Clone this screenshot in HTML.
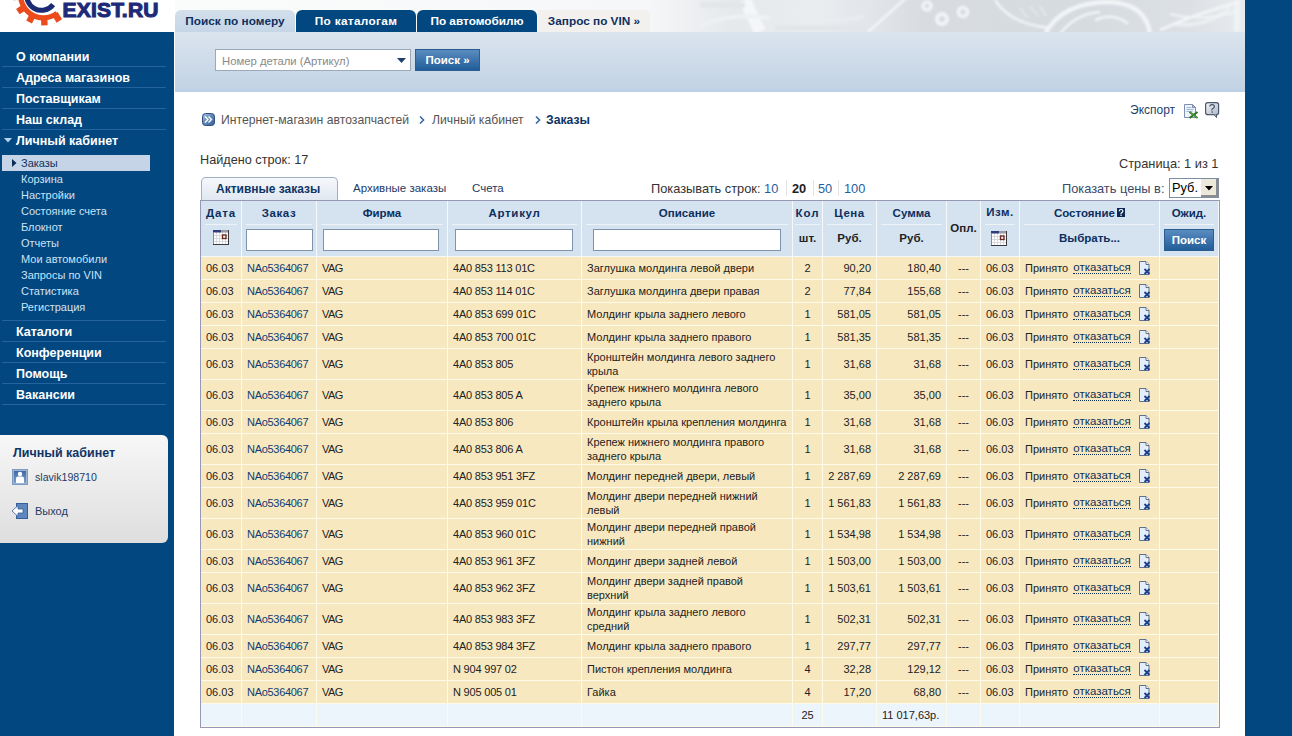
<!DOCTYPE html>
<html><head><meta charset="utf-8">
<style>
*{box-sizing:border-box}
html,body{margin:0;padding:0;width:1292px;height:736px;overflow:hidden;background:#fff;font-family:"Liberation Sans",sans-serif;font-size:11px;color:#222}
.abs{position:absolute;white-space:nowrap}
#side{position:absolute;left:0;top:32px;width:174px;height:704px;background:#02477f}
#rstrip{position:absolute;left:1245px;top:0;width:47px;height:736px;background:#02477f}
#hdr{position:absolute;left:175px;top:0}
#band{position:absolute;left:175px;top:32px;width:1070px;height:60px;background:linear-gradient(#dae4ee,#c3d3e4 92%,#bbd0e7)}
.tab{position:absolute;top:10px;height:22px;border-radius:6px 6px 0 0;font-weight:bold;font-size:11.8px;text-align:center;line-height:23px;white-space:nowrap}
.menu{position:absolute;left:16px;color:#fff;font-weight:bold;font-size:12.5px;line-height:21px;white-space:nowrap}
.msep{position:absolute;left:2px;width:164px;height:1px;background:#2563a0}
.sub{position:absolute;left:21px;color:#cce3f8;font-size:11px;line-height:16px;white-space:nowrap}
#cab{position:absolute;left:0;top:435px;width:168px;height:108px;border-radius:0 6px 6px 0;background:linear-gradient(#f7f7f7,#dedede)}
#tbl{position:absolute;left:200px;top:200px;width:1020px;height:528px;border:1px solid #9699b6;background:#fff}
.row{display:flex;position:relative}
.c{position:relative;height:100%;border-right:1px solid #fffbea;border-bottom:1px solid #fffbea;background:#f8e8c0;display:flex;align-items:center;padding:0 5px;line-height:14px;white-space:nowrap;color:#222}
.c a{color:#0d3c73;letter-spacing:-0.3px}.row:not(.hd) .c2{letter-spacing:-0.6px}.row:not(.hd) .c3{letter-spacing:-0.2px}
.c0{width:41px}.c1{width:75px}.c2{width:131px}.c3{width:134px}.c4{width:211px}.c5{width:30px;justify-content:center}.c6{width:54px;justify-content:flex-end}.c7{width:70px;justify-content:flex-end}.c8{width:34px;justify-content:center}.c9{width:39px}.c10{width:140px}.c11{width:59px}
.tot .c{background:#ecf4fc}
.tot .c7{justify-content:flex-start}
.otk{color:#0f2f55;border-bottom:1px dotted #0f2f55;margin-left:5px;line-height:12px;font-size:11.5px;position:relative;top:-1px}
.xi{margin-left:8px}
.hd .c{border-color:#f6f9fc;background:#d5e2ef;display:block;padding:0;font-weight:bold;color:#0c2f5e;font-size:11.5px;text-align:center}
.h1{position:absolute;left:4px;right:4px;top:0;height:24px;line-height:24px;border-bottom:1px solid #eef3f8}
.h2{position:absolute;left:0;right:0;top:24px;height:31px;line-height:27px}
.inp{position:absolute;top:28px;height:22px;border:1px solid #7f93ad;background:#fff}
.btn{background:linear-gradient(#5b8cc0,#215d98);color:#fff;font-weight:bold;border:1px solid #2a5d92;text-align:center}

</style></head><body>
<!-- logo -->
<svg class="abs" style="left:0;top:0" width="170" height="31"><g fill="#ec4b1c"><path d="M58.69 15.29A25.4 25.4 0 0 1 19.53 -13.69L24.42 -11.91A20.2 20.2 0 0 0 55.56 11.13Z"/><path d="M57.62 12.09L62.06 19.33L56.61 22.68L52.17 15.43Z"/><path d="M47.37 16.87L47.66 25.37L41.27 25.59L40.97 17.10Z"/><path d="M35.90 15.93L31.91 23.43L26.26 20.43L30.25 12.92Z"/><path d="M26.69 9.67L19.56 14.30L16.08 8.93L23.21 4.30Z"/><path d="M21.68 -0.27L13.20 0.32L12.75 -6.06L21.23 -6.66Z"/></g><path fill="#1d2a74" d="M55.13 6.15A17.3 17.3 0 0 1 25.24 -10.42L29.94 -8.71A12.3 12.3 0 0 0 51.19 3.07Z"/><text x="62.5" y="17.2" font-family="Liberation Sans" font-weight="bold" font-size="21" letter-spacing="0.2" fill="#1e2a78" stroke="#1e2a78" stroke-width="1.1">EXIST.RU</text></svg>

<svg id="hdr" width="1070" height="32" viewBox="175 0 1070 32"><defs><linearGradient id="hg" x1="175" x2="1245" gradientUnits="userSpaceOnUse"><stop offset="0" stop-color="#fafbfb"/><stop offset="0.44" stop-color="#f6f7f8"/><stop offset="0.48" stop-color="#eef0f2"/><stop offset="0.52" stop-color="#e6e9ec"/><stop offset="0.6" stop-color="#eaedf0"/><stop offset="0.65" stop-color="#e2e5e9"/><stop offset="0.7" stop-color="#d8dce0"/><stop offset="0.85" stop-color="#d6dbe0"/><stop offset="0.95" stop-color="#dde1e5"/><stop offset="1" stop-color="#e8ebee"/></linearGradient></defs><rect x="175" y="0" width="1070" height="32" fill="url(#hg)"/><filter id="hb" x="-5%" y="-50%" width="110%" height="200%"><feGaussianBlur stdDeviation="1.1"/></filter><g filter="url(#hb)" fill="none" stroke="#f2f4f6"><path d="M868 32L906 -2" stroke-width="3"/><path d="M1045 34Q1062 2 1110 2Q1146 4 1150 34" stroke-width="4.5"/><path d="M1060 34Q1075 14 1100 12" stroke-width="2.5"/><path d="M1237 0v32" stroke-width="6" stroke="#f0f3f6"/><path d="M1175 24Q1205 28 1230 8" stroke-width="4" stroke="#eceff2"/><circle cx="927" cy="6" r="4" stroke-width="3.5"/><circle cx="942" cy="19" r="5" stroke-width="4"/><circle cx="963" cy="12" r="4.5" stroke-width="3.5"/><path d="M995 0Q1010 24 1050 28" stroke-width="2.5"/><path d="M1160 30Q1200 12 1240 2" stroke-width="3"/><path d="M1170 14Q1200 22 1235 12" stroke-width="2"/><path d="M1095 20Q1115 12 1128 24" stroke-width="2.5"/><path d="M745 0L760 32" stroke-width="12" stroke="#f4f6f8"/><path d="M700 26Q730 12 770 18" stroke-width="4" stroke="#eef1f3"/><path d="M790 10Q830 26 865 16" stroke-width="3" stroke="#eaedf0"/><path d="M1020 8l8 10M1030 6l8 10M1040 6l6 10" stroke-width="1.5" stroke="#e6e9ec"/><path d="M700 5h45M775 28h90" stroke-width="5" stroke="#e2e6e9"/></g></svg>
<div id="rstrip"></div>
<div id="band"></div>
<div class="tab" style="left:175px;width:120px;background:linear-gradient(#d3dfeb,#c5d6e7);color:#0e2f5e">Поиск по номеру</div>
<div class="tab" style="left:296px;width:120px;background:#02477f;color:#fff;letter-spacing:0.35px">По каталогам</div>
<div class="tab" style="left:417px;width:120px;background:#02477f;color:#fff">По автомобилю</div>
<div class="tab" style="left:538px;width:112px;border-radius:0 5px 0 0;background:#f2f1ee;color:#0e2f5e">Запрос по VIN »</div>
<!-- search -->
<div class="abs" style="left:215px;top:49px;width:196px;height:22px;background:#fff;border:1px solid #9aaabb"></div>
<div class="abs" style="left:222px;top:55px;font-size:11.3px;color:#8a8a8a">Номер детали (Артикул)</div>
<svg class="abs" style="left:397px;top:58px" width="9" height="5"><path d="M0 0h9L4.5 5z" fill="#1d3f6e"/></svg>
<div class="abs btn" style="left:415px;top:49px;width:65px;height:22px;line-height:20px;font-size:11.5px">Поиск »</div>

<!-- sidebar -->
<div id="side"></div>
<div class="menu" style="top:47px">О компании</div>
<div class="msep" style="top:66px"></div>
<div class="menu" style="top:68px">Адреса магазинов</div>
<div class="msep" style="top:87px"></div>
<div class="menu" style="top:89px">Поставщикам</div>
<div class="msep" style="top:108px"></div>
<div class="menu" style="top:110px">Наш склад</div>
<div class="msep" style="top:129px"></div>
<svg class="abs" style="left:4px;top:138px" width="8" height="5"><path d="M0 0h8L4 4.5z" fill="#b5d3ee"/></svg>
<div class="menu" style="top:131px">Личный кабинет</div>
<div class="abs" style="left:2px;top:155px;width:148px;height:16px;background:#c5d5e7"></div>
<svg class="abs" style="left:12px;top:159px" width="5" height="8"><path d="M0 0v8l4.5-4z" fill="#0d2d57"/></svg>
<div class="sub" style="top:155px;color:#10305a">Заказы</div>
<div class="sub" style="top:171px">Корзина</div>
<div class="sub" style="top:187px">Настройки</div>
<div class="sub" style="top:203px">Состояние счета</div>
<div class="sub" style="top:219px">Блокнот</div>
<div class="sub" style="top:235px">Отчеты</div>
<div class="sub" style="top:251px">Мои автомобили</div>
<div class="sub" style="top:267px">Запросы по VIN</div>
<div class="sub" style="top:283px">Статистика</div>
<div class="sub" style="top:299px">Регистрация</div>
<div class="msep" style="top:320px"></div>
<div class="menu" style="top:322px">Каталоги</div>
<div class="msep" style="top:341px"></div>
<div class="menu" style="top:343px">Конференции</div>
<div class="msep" style="top:362px"></div>
<div class="menu" style="top:364px">Помощь</div>
<div class="msep" style="top:383px"></div>
<div class="menu" style="top:385px">Вакансии</div>
<div class="msep" style="top:404px"></div>

<div id="cab"></div>
<div class="abs" style="left:13px;top:446px;font-weight:bold;font-size:12.5px;color:#0f3466">Личный кабинет</div>
<svg class="abs" style="left:12px;top:469px" width="16" height="16"><defs><linearGradient id="ug" x1="0" y1="0" x2="0" y2="1"><stop offset="0" stop-color="#3f6aa5"/><stop offset="1" stop-color="#7ea0c9"/></linearGradient></defs><rect x="0.5" y="0.5" width="15" height="15" fill="#9bb4d3" stroke="#7e9cc2"/><rect x="2" y="2" width="12" height="12" fill="url(#ug)"/><circle cx="8" cy="5" r="2.2" fill="#fff"/><path d="M4 14v-4.5q0-2 2-2h4q2 0 2 2V14z" fill="#fff"/></svg>
<div class="abs" style="left:35px;top:471px;color:#1d3a66;font-size:10.6px">slavik198710</div>
<svg class="abs" style="left:12px;top:503px" width="16" height="16"><rect x="4.5" y="0.5" width="11" height="15" fill="#5f86bd" stroke="#35609b"/><path d="M0 8l6-5.5v3.5h5v4H6v3.5z" fill="#fff" stroke="#35609b" stroke-width="0.8"/></svg>
<div class="abs" style="left:35px;top:505px;color:#1d3a66">Выход</div>

<!-- breadcrumb -->
<svg class="abs" style="left:202px;top:113px" width="13" height="13"><defs><linearGradient id="bg1" x1="0" y1="0" x2="1" y2="1"><stop offset="0" stop-color="#a9c2de"/><stop offset="0.5" stop-color="#5f86b8"/><stop offset="1" stop-color="#365f95"/></linearGradient></defs><rect x="0.5" y="0.5" width="12" height="12" rx="3" fill="url(#bg1)" stroke="#2f4f80"/><path d="M3 3.5l3 3-3 3M6.5 3.5l3 3-3 3" stroke="#fff" stroke-width="1.4" fill="none"/></svg>
<div class="abs" style="left:221px;top:113px;font-size:12.2px;color:#555">Интернет-магазин автозапчастей</div>
<svg class="abs" style="left:419px;top:116px" width="6" height="8"><path d="M1 0.5l3.5 3.5L1 7.5" stroke="#3b6aa5" stroke-width="1.6" fill="none"/></svg>
<div class="abs" style="left:432px;top:113px;font-size:12.2px;color:#555">Личный кабинет</div>
<svg class="abs" style="left:535px;top:116px" width="6" height="8"><path d="M1 0.5l3.5 3.5L1 7.5" stroke="#3b6aa5" stroke-width="1.6" fill="none"/></svg>
<div class="abs" style="left:546px;top:113px;font-size:12.2px;font-weight:bold;color:#0f3466">Заказы</div>

<div class="abs" style="left:1130px;top:103px;font-size:12px;color:#1f3f6a">Экспорт</div>
<svg class="abs" style="left:1184px;top:104px" width="15" height="15"><path d="M0.5 0.5h8l3 3v10h-11z" fill="#eef4fb" stroke="#7e8fb0"/><path d="M8.5 0.5v3h3z" fill="#a8b8d0" stroke="#7e8fb0"/><path d="M2.5 3.5h5M2.5 5.5h7M2.5 7.5h6" stroke="#9fb4d0"/><path d="M5.5 8l8 6M13.5 8l-8 6" stroke="#2d7420" stroke-width="2"/><path d="M6 8.5l7.5 5.5" stroke="#6fbf5a" stroke-width="0.7"/></svg>
<svg class="abs" style="left:1205px;top:102px" width="15" height="16"><defs><linearGradient id="qg" x1="0" y1="0" x2="1" y2="1"><stop offset="0" stop-color="#f4f6fa"/><stop offset="1" stop-color="#aeb8c8"/></linearGradient></defs><rect x="0.6" y="0.6" width="13" height="12" rx="2.2" fill="url(#qg)" stroke="#4d586b" stroke-width="1.2"/><path d="M9 12.5l2.5 3v-3" fill="#c0c8d6" stroke="#4d586b"/><path d="M4.8 4.6q0-2 2.3-2t2.3 2q0 1.3-1.5 2t-.8 1.8" fill="none" stroke="#454d5c" stroke-width="1.1"/><rect x="6.6" y="9.4" width="1.3" height="1.3" fill="#454d5c"/></svg>
<div class="abs" style="left:200px;top:153px;font-size:12.7px;color:#333">Найдено строк: 17</div>
<div class="abs" style="left:1119px;top:156px;font-size:12.8px;color:#333">Страница: 1 из 1</div>

<!-- tabs -->
<div class="abs" style="left:201px;top:177px;width:137px;height:24px;border:1px solid #9fb0c6;border-bottom:0;border-radius:5px 5px 0 0;background:linear-gradient(#f6f8fb,#dfe7f1)"></div>
<div class="abs" style="left:216px;top:182px;font-size:12px;font-weight:bold;color:#0f3466">Активные заказы</div>
<div class="abs" style="left:353px;top:182px;font-size:11.5px;color:#1d3a66">Архивные заказы</div>
<div class="abs" style="left:472px;top:182px;font-size:11.5px;color:#1d3a66">Счета</div>
<div class="abs" style="left:651px;top:181px;font-size:12.8px;color:#333">Показывать строк: <span style="color:#1f5fa0">10</span></div>
<div class="abs" style="left:786px;top:180px;width:1px;height:16px;background:#e3e3e3"></div>
<div class="abs" style="left:792px;top:181px;font-size:12.8px;font-weight:bold;color:#222">20</div>
<div class="abs" style="left:813px;top:180px;width:1px;height:16px;background:#e3e3e3"></div>
<div class="abs" style="left:818px;top:181px;font-size:12.8px;color:#1f5fa0">50</div>
<div class="abs" style="left:838px;top:180px;width:1px;height:16px;background:#e3e3e3"></div>
<div class="abs" style="left:844px;top:181px;font-size:12.8px;color:#1f5fa0">100</div>
<div class="abs" style="left:1062px;top:181px;font-size:12.8px;color:#3a4a6a">Показать цены в:</div>
<div class="abs" style="left:1169px;top:178px;width:50px;height:20px;border:1px solid #7f8fa3;background:#fff"></div>
<div class="abs" style="left:1172px;top:180px;font-size:12.8px;color:#000">Руб.</div>
<div class="abs" style="left:1201px;top:179px;width:17px;height:18px;background:#ece8da;border-right:2px solid #8c8c8c;border-bottom:2px solid #8c8c8c"></div>
<svg class="abs" style="left:1205px;top:186px" width="8" height="5"><path d="M0 0h8L4 4.5z" fill="#000"/></svg>

<div id="tbl">
<div class="row hd" style="height:56px">
 <div class="c c0"><div class="h1" style="letter-spacing:0.9px">Дата</div><svg style="position:absolute;left:12px;top:29px" width="16" height="15"><rect x="0" y="0" width="16" height="15" fill="#fff"/><path d="M0 5.5h16M0 8.5h16M0 11.5h16M3.5 2v13M6.5 2v13M9.5 2v13M12.5 2v13" stroke="#d9d9de"/><rect x="0" y="0" width="8" height="2.5" fill="#2f3c78"/><rect x="8" y="0" width="8" height="2.5" fill="#9a9aa6"/><path d="M0.5 2v13M0 14.5h16M15.5 0v15" stroke="#3a3a40"/><path d="M0.5 2v12" stroke="#8a8a95"/><rect x="9.5" y="5" width="3.5" height="3.5" fill="#fff" stroke="#6b2a22" stroke-width="1.4"/></svg></div>
 <div class="c c1"><div class="h1" style="letter-spacing:0.6px">Заказ</div><div class="inp" style="left:4px;width:67px"></div></div>
 <div class="c c2"><div class="h1">Фирма</div><div class="inp" style="left:6px;width:116px"></div></div>
 <div class="c c3"><div class="h1" style="letter-spacing:0.7px">Артикул</div><div class="inp" style="left:7px;width:118px"></div></div>
 <div class="c c4"><div class="h1">Описание</div><div class="inp" style="left:11px;width:188px"></div></div>
 <div class="c c5"><div class="h1" style="left:2px;right:2px;letter-spacing:1px">Кол</div><div class="h2" style="color:#222">шт.</div></div>
 <div class="c c6"><div class="h1" style="letter-spacing:0.5px">Цена</div><div class="h2" style="color:#222">Руб.</div></div>
 <div class="c c7"><div class="h1">Сумма</div><div class="h2" style="color:#222">Руб.</div></div>
 <div class="c c8" style="line-height:55px;color:#222">Опл.</div>
 <div class="c c9"><div class="h1" style="line-height:22px;letter-spacing:0.5px">Изм.</div><svg style="position:absolute;left:10px;top:30px" width="16" height="15"><rect x="0" y="0" width="16" height="15" fill="#fff"/><path d="M0 5.5h16M0 8.5h16M0 11.5h16M3.5 2v13M6.5 2v13M9.5 2v13M12.5 2v13" stroke="#d9d9de"/><rect x="0" y="0" width="8" height="2.5" fill="#2f3c78"/><rect x="8" y="0" width="8" height="2.5" fill="#9a9aa6"/><path d="M0.5 2v13M0 14.5h16M15.5 0v15" stroke="#3a3a40"/><path d="M0.5 2v12" stroke="#8a8a95"/><rect x="9.5" y="5" width="3.5" height="3.5" fill="#fff" stroke="#6b2a22" stroke-width="1.4"/></svg></div>
 <div class="c c10"><div class="h1">Состояние <svg width="8" height="9" style="vertical-align:0px;margin-left:-1px"><rect width="8" height="9" fill="#0c2a55"/><path d="M2.3 3.2q0-1.7 1.8-1.7t1.8 1.6q0 1-1.1 1.5t-.7 1.4" fill="none" stroke="#fff" stroke-width="1.2"/><rect x="3.4" y="6.6" width="1.3" height="1.3" fill="#fff"/></svg></div><div class="h2">Выбрать...</div></div>
 <div class="c c11"><div class="h1">Ожид.</div><div class="abs btn" style="left:4px;top:28px;width:50px;height:22px;line-height:21px;font-size:11.5px">Поиск</div></div>
</div>
<div class="row" style="height:23px"><div class="c c0">06.03</div><div class="c c1"><a>NAo5364067</a></div><div class="c c2">VAG</div><div class="c c3">4A0 853 113 01C</div><div class="c c4">Заглушка молдинга левой двери</div><div class="c c5">2</div><div class="c c6">90,20</div><div class="c c7">180,40</div><div class="c c8">---</div><div class="c c9">06.03</div><div class="c c10">Принято <span class="otk">отказаться</span><svg class="xi" width="12" height="14" viewBox="0 0 12 14"><path d="M0.5 0.5h6.5l3 3v10h-9.5z" fill="#e3eefa" stroke="#5f7090"/><path d="M7 0.5v3h3" fill="#fff" stroke="#5f7090"/><path d="M5.5 8l5 5M10.5 8l-5 5" stroke="#1a3f8c" stroke-width="1.8"/></svg></div><div class="c c11"></div></div><div class="row" style="height:23px"><div class="c c0">06.03</div><div class="c c1"><a>NAo5364067</a></div><div class="c c2">VAG</div><div class="c c3">4A0 853 114 01C</div><div class="c c4">Заглушка молдинга двери правая</div><div class="c c5">2</div><div class="c c6">77,84</div><div class="c c7">155,68</div><div class="c c8">---</div><div class="c c9">06.03</div><div class="c c10">Принято <span class="otk">отказаться</span><svg class="xi" width="12" height="14" viewBox="0 0 12 14"><path d="M0.5 0.5h6.5l3 3v10h-9.5z" fill="#e3eefa" stroke="#5f7090"/><path d="M7 0.5v3h3" fill="#fff" stroke="#5f7090"/><path d="M5.5 8l5 5M10.5 8l-5 5" stroke="#1a3f8c" stroke-width="1.8"/></svg></div><div class="c c11"></div></div><div class="row" style="height:23px"><div class="c c0">06.03</div><div class="c c1"><a>NAo5364067</a></div><div class="c c2">VAG</div><div class="c c3">4A0 853 699 01C</div><div class="c c4">Молдинг крыла заднего левого</div><div class="c c5">1</div><div class="c c6">581,05</div><div class="c c7">581,05</div><div class="c c8">---</div><div class="c c9">06.03</div><div class="c c10">Принято <span class="otk">отказаться</span><svg class="xi" width="12" height="14" viewBox="0 0 12 14"><path d="M0.5 0.5h6.5l3 3v10h-9.5z" fill="#e3eefa" stroke="#5f7090"/><path d="M7 0.5v3h3" fill="#fff" stroke="#5f7090"/><path d="M5.5 8l5 5M10.5 8l-5 5" stroke="#1a3f8c" stroke-width="1.8"/></svg></div><div class="c c11"></div></div><div class="row" style="height:23px"><div class="c c0">06.03</div><div class="c c1"><a>NAo5364067</a></div><div class="c c2">VAG</div><div class="c c3">4A0 853 700 01C</div><div class="c c4">Молдинг крыла заднего правого</div><div class="c c5">1</div><div class="c c6">581,35</div><div class="c c7">581,35</div><div class="c c8">---</div><div class="c c9">06.03</div><div class="c c10">Принято <span class="otk">отказаться</span><svg class="xi" width="12" height="14" viewBox="0 0 12 14"><path d="M0.5 0.5h6.5l3 3v10h-9.5z" fill="#e3eefa" stroke="#5f7090"/><path d="M7 0.5v3h3" fill="#fff" stroke="#5f7090"/><path d="M5.5 8l5 5M10.5 8l-5 5" stroke="#1a3f8c" stroke-width="1.8"/></svg></div><div class="c c11"></div></div><div class="row" style="height:31px"><div class="c c0">06.03</div><div class="c c1"><a>NAo5364067</a></div><div class="c c2">VAG</div><div class="c c3">4A0 853 805</div><div class="c c4">Кронштейн молдинга левого заднего<br>крыла</div><div class="c c5">1</div><div class="c c6">31,68</div><div class="c c7">31,68</div><div class="c c8">---</div><div class="c c9">06.03</div><div class="c c10">Принято <span class="otk">отказаться</span><svg class="xi" width="12" height="14" viewBox="0 0 12 14"><path d="M0.5 0.5h6.5l3 3v10h-9.5z" fill="#e3eefa" stroke="#5f7090"/><path d="M7 0.5v3h3" fill="#fff" stroke="#5f7090"/><path d="M5.5 8l5 5M10.5 8l-5 5" stroke="#1a3f8c" stroke-width="1.8"/></svg></div><div class="c c11"></div></div><div class="row" style="height:31px"><div class="c c0">06.03</div><div class="c c1"><a>NAo5364067</a></div><div class="c c2">VAG</div><div class="c c3">4A0 853 805 A</div><div class="c c4">Крепеж нижнего молдинга левого<br>заднего крыла</div><div class="c c5">1</div><div class="c c6">35,00</div><div class="c c7">35,00</div><div class="c c8">---</div><div class="c c9">06.03</div><div class="c c10">Принято <span class="otk">отказаться</span><svg class="xi" width="12" height="14" viewBox="0 0 12 14"><path d="M0.5 0.5h6.5l3 3v10h-9.5z" fill="#e3eefa" stroke="#5f7090"/><path d="M7 0.5v3h3" fill="#fff" stroke="#5f7090"/><path d="M5.5 8l5 5M10.5 8l-5 5" stroke="#1a3f8c" stroke-width="1.8"/></svg></div><div class="c c11"></div></div><div class="row" style="height:23px"><div class="c c0">06.03</div><div class="c c1"><a>NAo5364067</a></div><div class="c c2">VAG</div><div class="c c3">4A0 853 806</div><div class="c c4">Кронштейн крыла крепления молдинга</div><div class="c c5">1</div><div class="c c6">31,68</div><div class="c c7">31,68</div><div class="c c8">---</div><div class="c c9">06.03</div><div class="c c10">Принято <span class="otk">отказаться</span><svg class="xi" width="12" height="14" viewBox="0 0 12 14"><path d="M0.5 0.5h6.5l3 3v10h-9.5z" fill="#e3eefa" stroke="#5f7090"/><path d="M7 0.5v3h3" fill="#fff" stroke="#5f7090"/><path d="M5.5 8l5 5M10.5 8l-5 5" stroke="#1a3f8c" stroke-width="1.8"/></svg></div><div class="c c11"></div></div><div class="row" style="height:31px"><div class="c c0">06.03</div><div class="c c1"><a>NAo5364067</a></div><div class="c c2">VAG</div><div class="c c3">4A0 853 806 A</div><div class="c c4">Крепеж нижнего молдинга правого<br>заднего крыла</div><div class="c c5">1</div><div class="c c6">31,68</div><div class="c c7">31,68</div><div class="c c8">---</div><div class="c c9">06.03</div><div class="c c10">Принято <span class="otk">отказаться</span><svg class="xi" width="12" height="14" viewBox="0 0 12 14"><path d="M0.5 0.5h6.5l3 3v10h-9.5z" fill="#e3eefa" stroke="#5f7090"/><path d="M7 0.5v3h3" fill="#fff" stroke="#5f7090"/><path d="M5.5 8l5 5M10.5 8l-5 5" stroke="#1a3f8c" stroke-width="1.8"/></svg></div><div class="c c11"></div></div><div class="row" style="height:23px"><div class="c c0">06.03</div><div class="c c1"><a>NAo5364067</a></div><div class="c c2">VAG</div><div class="c c3">4A0 853 951 3FZ</div><div class="c c4">Молдинг передней двери, левый</div><div class="c c5">1</div><div class="c c6">2 287,69</div><div class="c c7">2 287,69</div><div class="c c8">---</div><div class="c c9">06.03</div><div class="c c10">Принято <span class="otk">отказаться</span><svg class="xi" width="12" height="14" viewBox="0 0 12 14"><path d="M0.5 0.5h6.5l3 3v10h-9.5z" fill="#e3eefa" stroke="#5f7090"/><path d="M7 0.5v3h3" fill="#fff" stroke="#5f7090"/><path d="M5.5 8l5 5M10.5 8l-5 5" stroke="#1a3f8c" stroke-width="1.8"/></svg></div><div class="c c11"></div></div><div class="row" style="height:31px"><div class="c c0">06.03</div><div class="c c1"><a>NAo5364067</a></div><div class="c c2">VAG</div><div class="c c3">4A0 853 959 01C</div><div class="c c4">Молдинг двери передней нижний<br>левый</div><div class="c c5">1</div><div class="c c6">1 561,83</div><div class="c c7">1 561,83</div><div class="c c8">---</div><div class="c c9">06.03</div><div class="c c10">Принято <span class="otk">отказаться</span><svg class="xi" width="12" height="14" viewBox="0 0 12 14"><path d="M0.5 0.5h6.5l3 3v10h-9.5z" fill="#e3eefa" stroke="#5f7090"/><path d="M7 0.5v3h3" fill="#fff" stroke="#5f7090"/><path d="M5.5 8l5 5M10.5 8l-5 5" stroke="#1a3f8c" stroke-width="1.8"/></svg></div><div class="c c11"></div></div><div class="row" style="height:31px"><div class="c c0">06.03</div><div class="c c1"><a>NAo5364067</a></div><div class="c c2">VAG</div><div class="c c3">4A0 853 960 01C</div><div class="c c4">Молдинг двери передней правой<br>нижний</div><div class="c c5">1</div><div class="c c6">1 534,98</div><div class="c c7">1 534,98</div><div class="c c8">---</div><div class="c c9">06.03</div><div class="c c10">Принято <span class="otk">отказаться</span><svg class="xi" width="12" height="14" viewBox="0 0 12 14"><path d="M0.5 0.5h6.5l3 3v10h-9.5z" fill="#e3eefa" stroke="#5f7090"/><path d="M7 0.5v3h3" fill="#fff" stroke="#5f7090"/><path d="M5.5 8l5 5M10.5 8l-5 5" stroke="#1a3f8c" stroke-width="1.8"/></svg></div><div class="c c11"></div></div><div class="row" style="height:23px"><div class="c c0">06.03</div><div class="c c1"><a>NAo5364067</a></div><div class="c c2">VAG</div><div class="c c3">4A0 853 961 3FZ</div><div class="c c4">Молдинг двери задней левой</div><div class="c c5">1</div><div class="c c6">1 503,00</div><div class="c c7">1 503,00</div><div class="c c8">---</div><div class="c c9">06.03</div><div class="c c10">Принято <span class="otk">отказаться</span><svg class="xi" width="12" height="14" viewBox="0 0 12 14"><path d="M0.5 0.5h6.5l3 3v10h-9.5z" fill="#e3eefa" stroke="#5f7090"/><path d="M7 0.5v3h3" fill="#fff" stroke="#5f7090"/><path d="M5.5 8l5 5M10.5 8l-5 5" stroke="#1a3f8c" stroke-width="1.8"/></svg></div><div class="c c11"></div></div><div class="row" style="height:31px"><div class="c c0">06.03</div><div class="c c1"><a>NAo5364067</a></div><div class="c c2">VAG</div><div class="c c3">4A0 853 962 3FZ</div><div class="c c4">Молдинг двери задней правой<br>верхний</div><div class="c c5">1</div><div class="c c6">1 503,61</div><div class="c c7">1 503,61</div><div class="c c8">---</div><div class="c c9">06.03</div><div class="c c10">Принято <span class="otk">отказаться</span><svg class="xi" width="12" height="14" viewBox="0 0 12 14"><path d="M0.5 0.5h6.5l3 3v10h-9.5z" fill="#e3eefa" stroke="#5f7090"/><path d="M7 0.5v3h3" fill="#fff" stroke="#5f7090"/><path d="M5.5 8l5 5M10.5 8l-5 5" stroke="#1a3f8c" stroke-width="1.8"/></svg></div><div class="c c11"></div></div><div class="row" style="height:31px"><div class="c c0">06.03</div><div class="c c1"><a>NAo5364067</a></div><div class="c c2">VAG</div><div class="c c3">4A0 853 983 3FZ</div><div class="c c4">Молдинг крыла заднего левого<br>средний</div><div class="c c5">1</div><div class="c c6">502,31</div><div class="c c7">502,31</div><div class="c c8">---</div><div class="c c9">06.03</div><div class="c c10">Принято <span class="otk">отказаться</span><svg class="xi" width="12" height="14" viewBox="0 0 12 14"><path d="M0.5 0.5h6.5l3 3v10h-9.5z" fill="#e3eefa" stroke="#5f7090"/><path d="M7 0.5v3h3" fill="#fff" stroke="#5f7090"/><path d="M5.5 8l5 5M10.5 8l-5 5" stroke="#1a3f8c" stroke-width="1.8"/></svg></div><div class="c c11"></div></div><div class="row" style="height:23px"><div class="c c0">06.03</div><div class="c c1"><a>NAo5364067</a></div><div class="c c2">VAG</div><div class="c c3">4A0 853 984 3FZ</div><div class="c c4">Молдинг крыла заднего правого</div><div class="c c5">1</div><div class="c c6">297,77</div><div class="c c7">297,77</div><div class="c c8">---</div><div class="c c9">06.03</div><div class="c c10">Принято <span class="otk">отказаться</span><svg class="xi" width="12" height="14" viewBox="0 0 12 14"><path d="M0.5 0.5h6.5l3 3v10h-9.5z" fill="#e3eefa" stroke="#5f7090"/><path d="M7 0.5v3h3" fill="#fff" stroke="#5f7090"/><path d="M5.5 8l5 5M10.5 8l-5 5" stroke="#1a3f8c" stroke-width="1.8"/></svg></div><div class="c c11"></div></div><div class="row" style="height:23px"><div class="c c0">06.03</div><div class="c c1"><a>NAo5364067</a></div><div class="c c2">VAG</div><div class="c c3">N 904 997 02</div><div class="c c4">Пистон крепления молдинга</div><div class="c c5">4</div><div class="c c6">32,28</div><div class="c c7">129,12</div><div class="c c8">---</div><div class="c c9">06.03</div><div class="c c10">Принято <span class="otk">отказаться</span><svg class="xi" width="12" height="14" viewBox="0 0 12 14"><path d="M0.5 0.5h6.5l3 3v10h-9.5z" fill="#e3eefa" stroke="#5f7090"/><path d="M7 0.5v3h3" fill="#fff" stroke="#5f7090"/><path d="M5.5 8l5 5M10.5 8l-5 5" stroke="#1a3f8c" stroke-width="1.8"/></svg></div><div class="c c11"></div></div><div class="row" style="height:23px"><div class="c c0">06.03</div><div class="c c1"><a>NAo5364067</a></div><div class="c c2">VAG</div><div class="c c3">N 905 005 01</div><div class="c c4">Гайка</div><div class="c c5">4</div><div class="c c6">17,20</div><div class="c c7">68,80</div><div class="c c8">---</div><div class="c c9">06.03</div><div class="c c10">Принято <span class="otk">отказаться</span><svg class="xi" width="12" height="14" viewBox="0 0 12 14"><path d="M0.5 0.5h6.5l3 3v10h-9.5z" fill="#e3eefa" stroke="#5f7090"/><path d="M7 0.5v3h3" fill="#fff" stroke="#5f7090"/><path d="M5.5 8l5 5M10.5 8l-5 5" stroke="#1a3f8c" stroke-width="1.8"/></svg></div><div class="c c11"></div></div><div class="row tot" style="height:23px"><div class="c c0"></div><div class="c c1"></div><div class="c c2"></div><div class="c c3"></div><div class="c c4"></div><div class="c c5">25</div><div class="c c6"></div><div class="c c7">11 017,63р.</div><div class="c c8"></div><div class="c c9"></div><div class="c c10"></div><div class="c c11"></div></div>
</div>
</body></html>
